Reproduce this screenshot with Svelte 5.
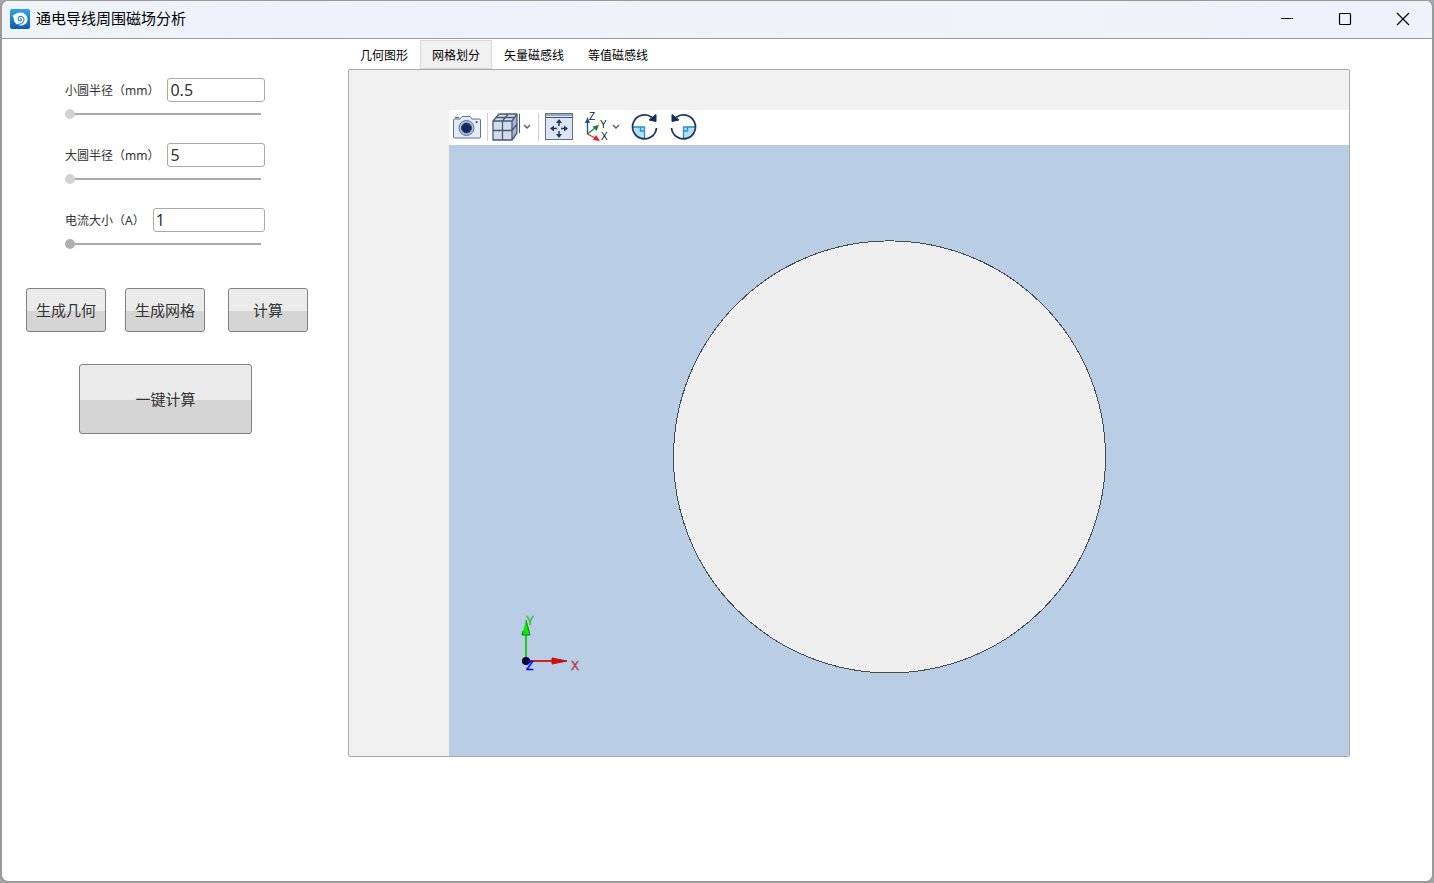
<script lang="ts">
  let fields = $state([
    { id: 'inner', label: '小圆半径（mm）', value: '0.5', pos: 0, active: false },
    { id: 'outer', label: '大圆半径（mm）', value: '5', pos: 0, active: false },
    { id: 'current', label: '电流大小（A）', value: '1', pos: 0, active: true },
  ]);

  const tabs = ['几何图形', '网格划分', '矢量磁感线', '等值磁感线'];
  let selected = $state(1);
</script>

<div class="window">
  <header class="titlebar">
    <svg class="logo" viewBox="0 0 20 20" aria-hidden="true">
      <defs>
        <linearGradient id="logo-bg" x1="0" y1="0" x2="0" y2="1">
          <stop offset="0" stop-color="#35a3e3" />
          <stop offset="1" stop-color="#0c5bb5" />
        </linearGradient>
      </defs>
      <rect width="20" height="20" rx="2" fill="url(#logo-bg)" />
      <path
        d="M2.5 6.5C4 6.5 6 3.5 10.5 3.500C14.5 3.5 17.500 6.5 17.500 10.2C17.500 14 14.5 16.500 11 16.500C7 16.500 4 14 3.800 10C3.700 8.500 3 8 2.500 6.500Z"
        fill="#f4faff"
      />
      <path
        d="M7.500 15.500C12 15.500 14.500 13 14 10C13.500 7 9.500 6.500 8.300 9C7.500 11 9.500 12.500 11 11.500C12 10.500 11 9.500 10.500 10"
        fill="none"
        stroke="#2a80c4"
        stroke-width="1.1"
        stroke-linecap="round"
      />
    </svg>
    <h1 class="title">通电导线周围磁场分析</h1>
    <div class="window-controls">
      <button aria-label="最小化">
        <svg viewBox="0 0 14 14"><path d="M1 6.5H13" /></svg>
      </button>
      <button aria-label="最大化">
        <svg viewBox="0 0 14 14"><rect x="1.5" y="1.5" width="11" height="11" rx="1" /></svg>
      </button>
      <button aria-label="关闭">
        <svg viewBox="0 0 14 14"><path d="M1 1L13 13M13 1L1 13" /></svg>
      </button>
    </div>
  </header>

  <main class="content">
    <aside class="sidebar">
      {#each fields as field (field.id)}
        <div class="field">
          <div class="field-row">
            <label for={field.id}>{field.label}</label>
            <input id={field.id} class="text" type="text" bind:value={field.value} />
          </div>
          <input
            class="slider"
            class:active={field.active}
            type="range"
            min="0"
            max="100"
            aria-label={field.label}
            bind:value={field.pos}
          />
        </div>
      {/each}

      <div class="actions">
        <button class="btn">生成几何</button>
        <button class="btn">生成网格</button>
        <button class="btn last">计算</button>
      </div>
      <button class="btn big">一键计算</button>
    </aside>

    <section class="main">
      <div class="tabs" role="tablist">
        {#each tabs as tab, i}
          <button
            class="tab"
            class:selected={selected === i}
            role="tab"
            aria-selected={selected === i}
            onclick={() => (selected = i)}>{tab}</button
          >
        {/each}
      </div>

      <div class="panel">
        <div class="view">
          <div class="toolbar">
            <button class="tool camera" aria-label="截图">
              <svg width="30" height="30" viewBox="0 0 30 30">
                <path
                  d="M2.5 7H8L10 4.5H18L20 7H27.5Q28.5 7 28.5 8V25Q28.5 26 27.5 26H2.5Q1.5 26 1.5 25V8Q1.5 7 2.5 7Z"
                  fill="#e3ecf5"
                  stroke="#5d7291"
                />
                <path d="M3 5.5H7" stroke="#5d7291" stroke-width="1.5" />
                <circle cx="14.5" cy="16" r="7.5" fill="#a9c6e3" stroke="#5d7291" />
                <circle cx="14.5" cy="16" r="5" fill="#14295e" stroke="#304875" />
                <circle cx="24.5" cy="10" r="1" fill="#304875" />
              </svg>
            </button>
            <span class="divider"></span>
            <button class="tool cube" aria-label="视图">
              <svg width="30" height="30" viewBox="1 0 30 30">
                <path d="M2 9L8 2H26L21 9V28H2Z" fill="#d3dcea" />
                <path d="M21 9L26 2V21L21 28Z" fill="#a9b7ce" />
                <path
                  d="M2 9H21V28H2ZM2 9L8 2H26L21 9M26 2V21L21 28M11.5 9V28M2 18.5H21L26 12M11.5 9L17 2M5 5.5H23.5"
                  fill="none"
                  stroke="#4a5873"
                  stroke-width="1.3"
                  stroke-linejoin="round"
                />
                <path d="M28.5 2V21" stroke="#3d5270" />
              </svg>
              <svg class="chevron" width="8" height="6" viewBox="0 0 8 6"><path d="M1 1L4 4L7 1" /></svg>
            </button>
            <span class="divider"></span>
            <button class="tool fit" aria-label="适应窗口">
              <svg width="30" height="30" viewBox="0 0 30 30">
                <rect x="2.5" y="1.5" width="27" height="26" fill="#dce5f1" stroke="#5c6f8b" />
                <path d="M3 3H29" stroke="#9aa9c0" stroke-width="2" />
                <path d="M3 5.5H29" stroke="#425873" />
                <path
                  d="M16 9V14M16 19V24M9 16.5H14M18 16.5H24"
                  stroke="#203860"
                  stroke-width="1.5"
                />
                <path
                  d="M16 7L19 11H13ZM16 26L19 22H13ZM7 16.5L11 13.5V19.5ZM25 16.5L21 13.5V19.5Z"
                  fill="#203860"
                />
              </svg>
            </button>
            <button class="tool axes" aria-label="坐标轴">
              <svg width="26" height="30" viewBox="0 0 26 30">
                <path d="M4.5 22V9" stroke="#244c9b" stroke-width="1.3" />
                <path d="M4.5 5L7 11H2Z" fill="#1d4bb0" />
                <path d="M4.5 22L12 16" stroke="#208a43" stroke-width="1.4" />
                <path d="M16 13L13.5 19L9.5 14.5Z" fill="#16823b" />
                <path d="M4.5 22L12 26" stroke="#eb2929" stroke-width="1.4" />
                <path d="M17 29L10 28L13 23Z" fill="#ed1c24" />
                <text x="6" y="8">Z</text>
                <text x="17" y="16">Y</text>
                <text x="18" y="28">X</text>
              </svg>
              <svg class="chevron" width="8" height="6" viewBox="0 0 8 6"><path d="M1 1L4 4L7 1" /></svg>
            </button>
            {#each ['顺时针旋转', '逆时针旋转'] as name, i}
              <button class="tool rotate" aria-label={name}>
                <svg class:flip={i === 1} width="30" height="30" viewBox="0 0 30 30">
                  <path d="M3.5 15H14.5V26.5Q5 25.5 3.5 15Z" fill="#aee0f7" />
                  <path
                    d="M3 15H14.5V26.5M10.5 15V19H14.5"
                    fill="none"
                    stroke="#2a8fc4"
                    stroke-width="1.4"
                  />
                  <path
                    d="M22 5.500A12 12 0 1 0 26.500 16"
                    fill="none"
                    stroke="#23375f"
                    stroke-width="1.8"
                  />
                  <path d="M26 2.500V9.500L19 8Z" fill="#182d57" stroke="#182d57" />
                </svg>
              </button>
            {/each}
          </div>

          <svg class="canvas" viewBox="0 0 900 611" role="img" aria-label="网格划分">
            <circle
              cx="440.5"
              cy="311.9"
              r="216"
              fill="#efefef"
              stroke="#444b54"
              shape-rendering="crispEdges"
            />
            <g transform="translate(77 516)">
              <path d="M0 0V-28" stroke="#16cf16" stroke-width="2" />
              <path d="M0 -41L4 -26H-4Z" fill="#00f000" />
              <path d="M0 -41L4 -26H-4L-3 -30" fill="none" stroke="#267526" />
              <path d="M0 0H28" stroke="#d02323" stroke-width="2" />
              <path d="M26 -3L41 0L26 3Z" fill="#f00000" stroke="#a02020" />
              <circle r="4" fill="#00002d" />
              <text x="0" y="-36" fill="#2fc22f" stroke="#2fc22f">Y</text>
              <text x="45" y="9" fill="#b43a49" stroke="#b43a49">X</text>
              <text x="0" y="9" fill="#0000e6" stroke="#0000e6">Z</text>
            </g>
          </svg>
        </div>
      </div>
    </section>
  </main>
</div>

<style>
  :global(body) {
    background: #a6a6a6;
  }

  .window {
    box-sizing: border-box;
    display: flex;
    flex-direction: column;
    min-height: 100vh;
    border: 1px solid #9a9a9a;
    border-width: 1px 2px 2px;
    border-radius: 8px;
    background: #fff;
    color: #333;
    font-family: 'Noto Sans', 'Noto Sans CJK SC', sans-serif;
    overflow: hidden;
  }

  button {
    margin: 0;
    padding: 0;
    border: 0;
    background: none;
    color: inherit;
    font-family: inherit;
  }

  .titlebar {
    display: flex;
    align-items: center;
    height: 35px;
    padding: 0 0 2px 8px;
    border-bottom: 1px solid #999;
    background: linear-gradient(90deg, #eef4f8, #edf2fb 20%, #eef4f8 75%, #edf2fb 90%);
  }

  .logo {
    width: 20px;
    height: 20px;
  }

  .title {
    margin: 0 auto 0 6px;
    padding-bottom: 2px;
    color: #000;
    font-size: 15px;
    font-weight: 400;
    line-height: 20px;
  }

  .window-controls {
    display: flex;
    height: 100%;
  }

  .window-controls button {
    display: grid;
    place-items: center;
    width: 58px;
  }

  .window-controls svg {
    width: 14px;
    height: 14px;
    fill: none;
    stroke: #000;
    stroke-width: 1.2;
  }

  .content {
    display: flex;
    flex: 1;
    padding: 1px 82px 24px 0;
  }

  .sidebar {
    box-sizing: border-box;
    flex: none;
    width: 346px;
    padding: 38px 0 0 24px;
  }

  .field {
    width: 200px;
    height: 65px;
    margin-left: 39px;
  }

  .field-row {
    display: flex;
    align-items: center;
    gap: 8px;
    height: 24px;
  }

  label {
    padding-top: 2px;
    font-size: 12px;
    line-height: 24px;
    white-space: nowrap;
  }

  .text {
    box-sizing: border-box;
    flex: 1;
    min-width: 0;
    height: 24px;
    padding: 0 2px;
    border: 1px solid #aaa;
    border-radius: 3px;
    background: #fff;
    color: #333;
    font-family: inherit;
    font-size: 16px;
  }

  .slider {
    display: block;
    appearance: none;
    width: 196px;
    height: 10px;
    margin: 7px 0 0;
    background: linear-gradient(#aaa, #aaa) center / 100% 2px no-repeat;
  }

  .slider::-webkit-slider-thumb {
    appearance: none;
    width: 10px;
    height: 10px;
    border-radius: 50%;
    background: #d2d2d2;
  }

  .slider.active::-webkit-slider-thumb {
    background: #acb0b5;
  }

  .actions {
    display: flex;
    gap: 19px;
    margin-top: 15px;
  }

  .btn {
    box-sizing: border-box;
    width: 80px;
    height: 44px;
    padding-bottom: 2px;
    border: 1px solid #808080;
    border-radius: 3px;
    background: linear-gradient(#ebebeb 52%, #d5d5d5 52%);
    font-size: 15px;
  }

  .btn.last {
    margin-left: 4px;
  }

  .btn.big {
    display: block;
    width: 173px;
    height: 70px;
    margin: 32px 0 0 53px;
  }

  .main {
    flex: 1;
    min-width: 0;
  }

  .tabs {
    display: flex;
  }

  .tab {
    box-sizing: border-box;
    height: 29px;
    padding: 0 11px;
    border: 1px solid transparent;
    color: #000;
    font-size: 12px;
    white-space: nowrap;
  }

  .tab.selected {
    border-color: #d9d9d9;
    background: #f1f1f1;
  }

  .panel {
    padding: 40px 0 0 100px;
    border: 1px solid #aaa;
    border-radius: 2px;
    background: #f1f1f1;
  }

  .toolbar {
    box-sizing: border-box;
    display: flex;
    align-items: center;
    height: 35px;
    padding: 0 0 2px 3px;
    background: #fff;
  }

  .tool {
    display: flex;
    align-items: center;
  }

  .tool svg {
    display: block;
  }

  .tool.cube {
    gap: 1px;
    margin-right: 2px;
  }

  .tool.axes {
    gap: 3px;
    margin: 0 10px;
  }

  .tool.rotate {
    margin-right: 8px;
  }

  .divider {
    width: 1px;
    height: 28px;
    margin: 0 4px 0 5px;
    background: #d0d0d0;
  }

  .tool .chevron {
    fill: none;
    stroke: #506066;
    stroke-width: 1.4;
  }

  .tool text {
    fill: #111;
    font-family: 'Liberation Sans', sans-serif;
    font-size: 10px;
  }

  .flip {
    transform: scaleX(-1);
  }

  .canvas {
    display: block;
    width: 100%;
    background: #b9cde5;
  }

  .canvas text {
    font-family: 'Liberation Sans', sans-serif;
    font-size: 12px;
    stroke-width: 0.4;
  }
</style>
